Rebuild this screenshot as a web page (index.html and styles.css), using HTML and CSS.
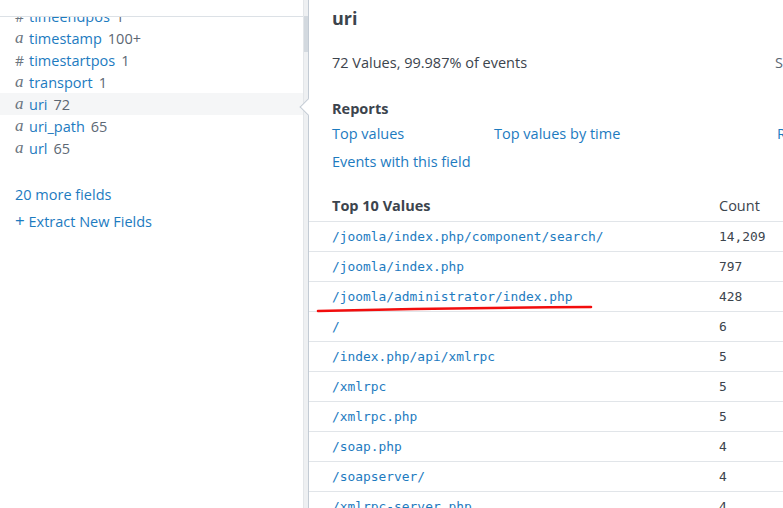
FILE: index.html
```html
<!DOCTYPE html>
<html>
<head>
<meta charset="utf-8">
<link rel="stylesheet" href="styles.css">
</head>
<body>
<div class="page">
  <aside class="sidebar">
    <div class="sidebar-top"></div>
    <div class="field-scroll">
      <ul class="field-list">
        <li class="field"><span class="type num">#</span><span class="name">timeendpos</span><span class="count">1</span></li>
        <li class="field"><span class="type str">a</span><span class="name">timestamp</span><span class="count">100+</span></li>
        <li class="field"><span class="type num">#</span><span class="name">timestartpos</span><span class="count">1</span></li>
        <li class="field"><span class="type str">a</span><span class="name">transport</span><span class="count">1</span></li>
        <li class="field active"><span class="type str">a</span><span class="name">uri</span><span class="count">72</span></li>
        <li class="field"><span class="type str">a</span><span class="name">uri_path</span><span class="count">65</span></li>
        <li class="field"><span class="type str">a</span><span class="name">url</span><span class="count">65</span></li>
      </ul>
      <div class="more">20 more fields</div>
      <div class="extract"><span class="plus">+</span> Extract New Fields</div>
    </div>
  </aside>
  <div class="scrollbar"><div class="thumb"></div></div>
  <section class="popover">
    <h1 class="title">uri</h1>
    <div class="stats">
      <span>72 Values, 99.987% of events</span>
      <span class="selected">Selected</span>
    </div>
    <h2 class="section">Reports</h2>
    <div class="reports">
      <a>Top values</a>
      <a>Top values by time</a>
      <a>Rare values</a>
      <a>Events with this field</a>
    </div>
    <table class="values">
      <thead>
        <tr><th class="col-val">Top 10 Values</th><th class="col-count">Count</th></tr>
      </thead>
      <tbody>
        <tr><td class="val">/joomla/index.php/component/search/</td><td class="cnt">14,209</td></tr>
        <tr><td class="val">/joomla/index.php</td><td class="cnt">797</td></tr>
        <tr><td class="val">/joomla/administrator/index.php</td><td class="cnt">428</td></tr>
        <tr><td class="val">/</td><td class="cnt">6</td></tr>
        <tr><td class="val">/index.php/api/xmlrpc</td><td class="cnt">5</td></tr>
        <tr><td class="val">/xmlrpc</td><td class="cnt">5</td></tr>
        <tr><td class="val">/xmlrpc.php</td><td class="cnt">5</td></tr>
        <tr><td class="val">/soap.php</td><td class="cnt">4</td></tr>
        <tr><td class="val">/soapserver/</td><td class="cnt">4</td></tr>
        <tr><td class="val">/xmlrpc-server.php</td><td class="cnt">4</td></tr>
      </tbody>
    </table>
  </section>
  <div class="arrow"></div>
  <svg class="annotation" width="783" height="508" viewBox="0 0 783 508">
    <path d="M318 311 Q 455 308 591 307" fill="none" stroke="#f20d0d" stroke-width="2.6" stroke-linecap="round"/>
  </svg>
</div>
</body>
</html>
```

FILE: styles.css
```css
html, body {
  margin: 0;
  padding: 0;
  background: #fff;
}
body {
  font-family: "Open Sans", "Liberation Sans", sans-serif;
  color: #3c444d;
  width: 783px;
  height: 508px;
  overflow: hidden;
}
.page {
  position: relative;
  display: flex;
  height: 508px;
  overflow: hidden;
}
.sidebar {
  width: 303px;
  flex: none;
  display: flex;
  flex-direction: column;
}
.sidebar-top {
  height: 16px;
  border-bottom: 1px solid #dce1e6;
  flex: none;
}
.field-scroll {
  flex: 1;
  overflow: hidden;
}
.field-list {
  list-style: none;
  margin: -12px 0 0 0;
  padding: 0;
}
.field {
  height: 22px;
  display: flex;
  align-items: center;
  padding-left: 15px;
  font-size: 14.5px;
  white-space: nowrap;
}
.field.active {
  background: #f5f6f7;
}
.type {
  width: 14px;
  color: #6b7580;
}
.type.str {
  font-family: "Liberation Serif", serif;
  font-style: italic;
  font-size: 17px;
}
.type.num {
  font-size: 14px;
}
.name {
  color: #1d7bbf;
}
.count {
  color: #5c6773;
  margin-left: 6px;
}
.more, .extract {
  color: #1d7bbf;
  font-size: 14.5px;
  padding-left: 15px;
  height: 26px;
  line-height: 26px;
  white-space: nowrap;
}
.more {
  margin-top: 23px;
}
.plus {
  font-size: 17px;
}
.scrollbar {
  width: 4px;
  flex: none;
  background: #eef0f2;
  border-left: 1px solid #e3e6e9;
  padding-top: 16px;
}
.thumb {
  height: 36px;
  background: #d3d9df;
}
.popover {
  flex: none;
  width: 600px;
  border-left: 1px solid #c3cbd4;
  padding-top: 6px;
}
.title {
  margin: 0 0 0 23px;
  font-size: 18px;
  font-weight: 700;
  line-height: 24px;
}
.stats {
  display: grid;
  grid-template-columns: 443px auto;
  margin: 23px 0 0 23px;
  font-size: 14.5px;
  line-height: 20px;
  white-space: nowrap;
}
.selected {
  color: #5c6773;
}
.section {
  margin: 26px 0 0 23px;
  font-size: 14.5px;
  font-weight: 700;
  line-height: 20px;
}
.reports {
  display: grid;
  grid-template-columns: 162px 283px auto;
  grid-auto-rows: 28px;
  margin: 3px 0 0 23px;
  font-size: 14.5px;
  line-height: 24px;
  white-space: nowrap;
}
.reports a {
  color: #1d7bbf;
}
.values {
  border-collapse: collapse;
  width: 100%;
  margin-top: 11px;
}
.values th {
  text-align: left;
  font-size: 14.5px;
  height: 32px;
  padding: 0;
  border-bottom: 1px solid #e1e5e9;
  vertical-align: middle;
}
.values .col-val {
  padding-left: 23px;
  width: 387px;
  font-weight: 700;
}
.values .col-count {
  font-weight: 400;
}
.values td {
  height: 29px;
  padding: 0;
  border-bottom: 1px solid #e1e5e9;
  font-family: "DejaVu Sans Mono", "Liberation Mono", monospace;
  font-size: 12.9px;
  vertical-align: middle;
  white-space: nowrap;
}
.values td.val {
  padding-left: 23px;
  color: #1d7bbf;
}
.values td.cnt {
  color: #3c444d;
}
.arrow {
  position: absolute;
  left: 302px;
  top: 101px;
  width: 11px;
  height: 11px;
  background: #fff;
  border-left: 1px solid #c3cbd4;
  border-bottom: 1px solid #c3cbd4;
  transform: rotate(45deg);
}
.annotation {
  position: absolute;
  left: 0;
  top: 0;
  pointer-events: none;
}
```
